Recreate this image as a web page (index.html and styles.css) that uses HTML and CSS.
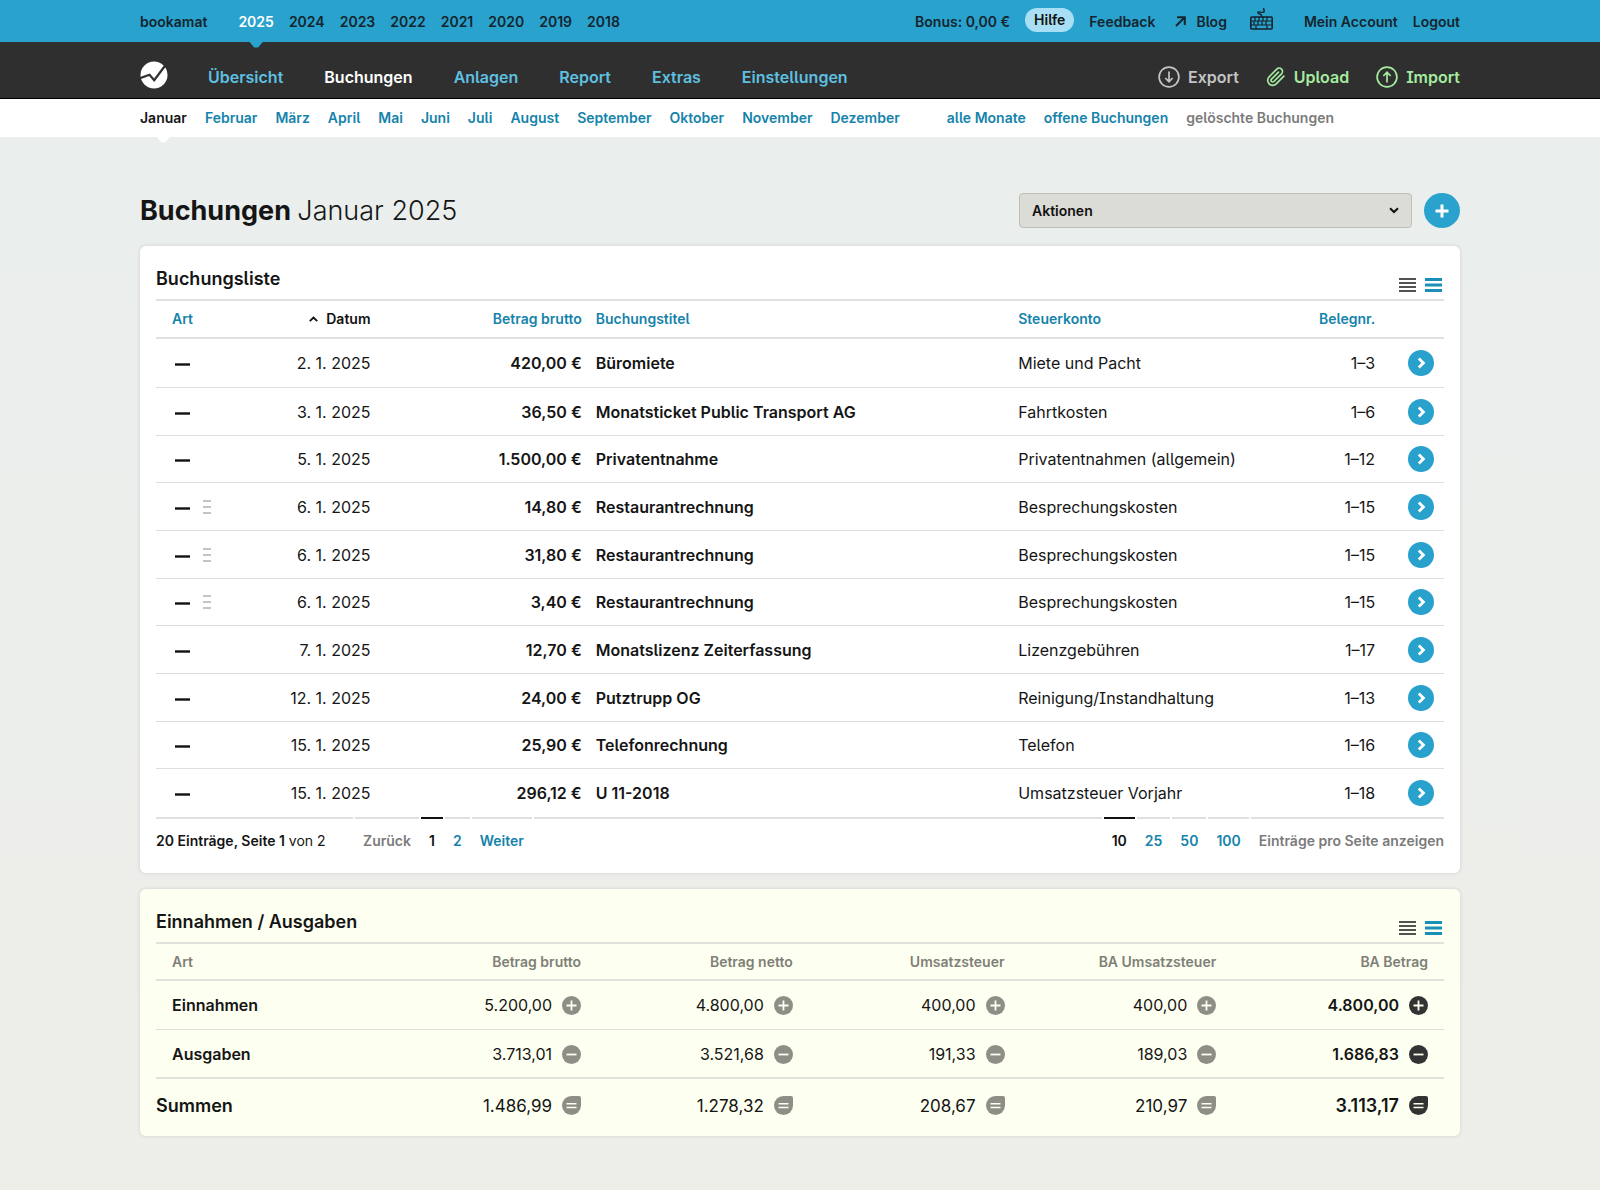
FILE: index.html
```html
<!DOCTYPE html>
<html lang="de">
<head>
<meta charset="utf-8">
<meta name="viewport" content="width=device-width, initial-scale=1">
<title>bookamat – Buchungen Januar 2025</title>
<link rel="stylesheet" href="styles.css">
</head>
<body>
<svg class="sprite" aria-hidden="true">
  <symbol id="i-go" viewBox="0 0 26 26"><circle cx="13" cy="13" r="13" fill="#28a2cd"/><path d="M10.8 8.6 15.4 13l-4.6 4.4" fill="none" stroke="#fff" stroke-width="2.8"/></symbol>
  <symbol id="i-minus" viewBox="0 0 15 3"><path d="M0 1.5h15" stroke="#111" stroke-width="2.4"/></symbol>
  <symbol id="i-split" viewBox="0 0 10 16"><path d="M1 2h8M1 8h8M1 14h8" stroke="#c4c4c4" stroke-width="2"/></symbol>
  <symbol id="i-dense" viewBox="0 0 17 14"><path d="M0 1h17M0 5h17M0 9h17M0 13h17" stroke="#1a1a1a" stroke-width="1.6"/></symbol>
  <symbol id="i-wide" viewBox="0 0 17 14"><path d="M0 1.5h17M0 7h17M0 12.5h17" stroke="#1a8fb8" stroke-width="2.8"/></symbol>
  <symbol id="i-plus" viewBox="0 0 19 19"><circle cx="9.5" cy="9.5" r="9.5" fill="currentColor"/><path d="M4.5 9.5h10M9.5 4.5v10" stroke="#fdfff0" stroke-width="1.8"/></symbol>
  <symbol id="i-less" viewBox="0 0 19 19"><circle cx="9.5" cy="9.5" r="9.5" fill="currentColor"/><path d="M4.5 9.5h10" stroke="#fdfff0" stroke-width="1.8"/></symbol>
  <symbol id="i-sum" viewBox="0 0 19 19"><path d="M9.5 0H17a2 2 0 0 1 2 2v7.5A9.5 9.5 0 1 1 9.5 0z" fill="currentColor"/><path d="M4.5 7.8h10M4.5 11.5h10" stroke="#fdfff0" stroke-width="1.5"/></symbol>
</svg>

<header>
  <div class="topbar">
    <div class="wrap topbar-row">
      <a class="brand" href="#">bookamat</a>
      <nav class="years" aria-label="Jahr">
        <a class="current" href="#">2025</a><a href="#">2024</a><a href="#">2023</a><a href="#">2022</a><a href="#">2021</a><a href="#">2020</a><a href="#">2019</a><a href="#">2018</a>
      </nav>
      <nav class="service" aria-label="Service">
        <a href="#">Bonus: 0,00 €</a>
        <a class="pill" href="#">Hilfe</a>
        <a href="#">Feedback</a>
        <a class="blog" href="#"><svg width="11" height="11" viewBox="0 0 11 11"><path d="M1 10 9.5 1.5M2 1.2h7.8V9" fill="none" stroke="currentColor" stroke-width="2"/></svg>Blog</a>
        <a class="keys" href="#" aria-label="Tastaturkürzel"><svg width="23" height="22" viewBox="0 0 23 22" fill="none" stroke="#142229"><path d="M11.5 9V7.5C11.5 5.5 7.8 6.5 7.8 4.5S13.5 6 14.3 3.5L13.5 0" stroke-width="1.4"/><rect x=".8" y="9" width="21.4" height="12" rx="1" stroke-width="1.6"/><path d="M1 13h21M1 17h21M5 9v4M9 9v4M13 9v4M17 9v4M4 13v4M8 13v4M12 13v4M16 13v4M6 17v4M17 17v4" stroke-width="1.2"/></svg></a>
        <a href="#">Mein Account</a>
        <a href="#">Logout</a>
      </nav>
    </div>
  </div>
  <div class="mainbar">
    <div class="wrap mainbar-row">
      <a class="logo" href="#" aria-label="Startseite"><svg width="28" height="28" viewBox="0 0 28 28"><circle cx="14" cy="14" r="13.5" fill="#fff"/><path d="M0 17.2 9.5 13.8l4.7 5.4L26 3.5" fill="none" stroke="#2f2f2f" stroke-width="2.2"/></svg></a>
      <nav class="sections" aria-label="Hauptnavigation">
        <a href="#">Übersicht</a><a class="current" href="#">Buchungen</a><a href="#">Anlagen</a><a href="#">Report</a><a href="#">Extras</a><a href="#">Einstellungen</a>
      </nav>
      <nav class="transfer" aria-label="Daten">
        <a class="export" href="#"><svg width="22" height="22" viewBox="0 0 22 22"><g fill="none" stroke="currentColor" stroke-width="1.7"><circle cx="11" cy="11" r="9.9"/><path d="M11 5.5v10M7.3 12l3.7 3.7 3.7-3.7"/></g></svg>Export</a>
        <a href="#"><svg width="20" height="22" viewBox="0 0 24 24"><path d="M21.44 11.05l-9.19 9.19a6 6 0 0 1-8.49-8.49l9.19-9.19a4 4 0 0 1 5.66 5.66l-9.2 9.19a2 2 0 0 1-2.83-2.83l8.49-8.48" fill="none" stroke="currentColor" stroke-width="2" stroke-linecap="round"/></svg>Upload</a>
        <a href="#"><svg width="22" height="22" viewBox="0 0 22 22"><g fill="none" stroke="currentColor" stroke-width="1.7"><circle cx="11" cy="11" r="9.9"/><path d="M11 16.5v-10M7.3 10 11 6.3l3.7 3.7"/></g></svg>Import</a>
      </nav>
    </div>
  </div>
  <div class="monthbar">
    <nav class="wrap months" aria-label="Monat">
      <a class="current" href="#">Januar</a><a href="#">Februar</a><a href="#">März</a><a href="#">April</a><a href="#">Mai</a><a href="#">Juni</a><a href="#">Juli</a><a href="#">August</a><a href="#">September</a><a href="#">Oktober</a><a href="#">November</a><a href="#">Dezember</a>
      <a class="all" href="#">alle Monate</a><a href="#">offene Buchungen</a><a class="muted" href="#">gelöschte Buchungen</a>
    </nav>
  </div>
</header>

<main class="wrap">
  <div class="page-head">
    <h1>Buchungen <span>Januar 2025</span></h1>
    <div class="select-box">
      <select aria-label="Aktionen"><option>Aktionen</option></select>
      <svg width="10" height="7" viewBox="0 0 10 7"><path d="M1 1.2 5 5l4-3.8" fill="none" stroke="#111" stroke-width="2"/></svg>
    </div>
    <button class="add" type="button" aria-label="Neue Buchung"><svg width="14" height="14" viewBox="0 0 14 14"><path d="M7 .5v13M.5 7h13" stroke="#fff" stroke-width="3"/></svg></button>
  </div>

  <section class="card">
    <div class="card-head">
      <h2>Buchungsliste</h2>
      <div class="density">
        <button type="button" aria-label="Kompakt"><svg width="17" height="14"><use href="#i-dense"/></svg></button>
        <button type="button" aria-label="Weit"><svg width="17" height="14"><use href="#i-wide"/></svg></button>
      </div>
    </div>
    <table class="bookings">
      <colgroup><col class="c-art"><col class="c-date"><col class="c-sum"><col class="c-title"><col class="c-account"><col class="c-no"><col class="c-go"></colgroup>
      <thead>
        <tr><th><a href="#">Art</a></th><th class="num"><a class="sorted" href="#"><svg width="9" height="6" viewBox="0 0 9 6"><path d="M.8 5.2 4.5 1.5l3.7 3.7" fill="none" stroke="#111" stroke-width="1.8"/></svg>Datum</a></th><th class="num"><a href="#">Betrag brutto</a></th><th><a href="#">Buchungstitel</a></th><th><a href="#">Steuerkonto</a></th><th class="num"><a href="#">Belegnr.</a></th><th></th></tr>
      </thead>
      <tbody>
        <tr><td><svg class="minus"><use href="#i-minus"/></svg></td><td class="num">2. 1. 2025</td><td class="num strong">420,00 €</td><td class="strong">Büromiete</td><td>Miete und Pacht</td><td class="num">1–3</td><td class="go"><a href="#" aria-label="Öffnen"><svg><use href="#i-go"/></svg></a></td></tr>
        <tr><td><svg class="minus"><use href="#i-minus"/></svg></td><td class="num">3. 1. 2025</td><td class="num strong">36,50 €</td><td class="strong">Monatsticket Public Transport AG</td><td>Fahrtkosten</td><td class="num">1–6</td><td class="go"><a href="#" aria-label="Öffnen"><svg><use href="#i-go"/></svg></a></td></tr>
        <tr><td><svg class="minus"><use href="#i-minus"/></svg></td><td class="num">5. 1. 2025</td><td class="num strong">1.500,00 €</td><td class="strong">Privatentnahme</td><td>Privatentnahmen (allgemein)</td><td class="num">1–12</td><td class="go"><a href="#" aria-label="Öffnen"><svg><use href="#i-go"/></svg></a></td></tr>
        <tr><td><svg class="minus"><use href="#i-minus"/></svg><svg class="split"><use href="#i-split"/></svg></td><td class="num">6. 1. 2025</td><td class="num strong">14,80 €</td><td class="strong">Restaurantrechnung</td><td>Besprechungskosten</td><td class="num">1–15</td><td class="go"><a href="#" aria-label="Öffnen"><svg><use href="#i-go"/></svg></a></td></tr>
        <tr><td><svg class="minus"><use href="#i-minus"/></svg><svg class="split"><use href="#i-split"/></svg></td><td class="num">6. 1. 2025</td><td class="num strong">31,80 €</td><td class="strong">Restaurantrechnung</td><td>Besprechungskosten</td><td class="num">1–15</td><td class="go"><a href="#" aria-label="Öffnen"><svg><use href="#i-go"/></svg></a></td></tr>
        <tr><td><svg class="minus"><use href="#i-minus"/></svg><svg class="split"><use href="#i-split"/></svg></td><td class="num">6. 1. 2025</td><td class="num strong">3,40 €</td><td class="strong">Restaurantrechnung</td><td>Besprechungskosten</td><td class="num">1–15</td><td class="go"><a href="#" aria-label="Öffnen"><svg><use href="#i-go"/></svg></a></td></tr>
        <tr><td><svg class="minus"><use href="#i-minus"/></svg></td><td class="num">7. 1. 2025</td><td class="num strong">12,70 €</td><td class="strong">Monatslizenz Zeiterfassung</td><td>Lizenzgebühren</td><td class="num">1–17</td><td class="go"><a href="#" aria-label="Öffnen"><svg><use href="#i-go"/></svg></a></td></tr>
        <tr><td><svg class="minus"><use href="#i-minus"/></svg></td><td class="num">12. 1. 2025</td><td class="num strong">24,00 €</td><td class="strong">Putztrupp OG</td><td>Reinigung/Instandhaltung</td><td class="num">1–13</td><td class="go"><a href="#" aria-label="Öffnen"><svg><use href="#i-go"/></svg></a></td></tr>
        <tr><td><svg class="minus"><use href="#i-minus"/></svg></td><td class="num">15. 1. 2025</td><td class="num strong">25,90 €</td><td class="strong">Telefonrechnung</td><td>Telefon</td><td class="num">1–16</td><td class="go"><a href="#" aria-label="Öffnen"><svg><use href="#i-go"/></svg></a></td></tr>
        <tr><td><svg class="minus"><use href="#i-minus"/></svg></td><td class="num">15. 1. 2025</td><td class="num strong">296,12 €</td><td class="strong">U 11-2018</td><td>Umsatzsteuer Vorjahr</td><td class="num">1–18</td><td class="go"><a href="#" aria-label="Öffnen"><svg><use href="#i-go"/></svg></a></td></tr>
      </tbody>
    </table>
    <div class="pager">
      <span class="count"><b>20 Einträge, Seite 1</b> von 2</span>
      <span class="muted">Zurück</span>
      <a class="current" href="#">1</a>
      <a href="#">2</a>
      <a href="#">Weiter</a>
      <span class="fill"></span>
      <a class="current" href="#">10</a>
      <a href="#">25</a>
      <a href="#">50</a>
      <a href="#">100</a>
      <span class="muted last">Einträge pro Seite anzeigen</span>
    </div>
  </section>

  <section class="card totals-card">
    <div class="card-head">
      <h2>Einnahmen / Ausgaben</h2>
      <div class="density">
        <button type="button" aria-label="Kompakt"><svg width="17" height="14"><use href="#i-dense"/></svg></button>
        <button type="button" aria-label="Weit"><svg width="17" height="14"><use href="#i-wide"/></svg></button>
      </div>
    </div>
    <table class="totals">
      <thead>
        <tr><th>Art</th><th>Betrag brutto</th><th>Betrag netto</th><th>Umsatzsteuer</th><th>BA Umsatzsteuer</th><th>BA Betrag</th></tr>
      </thead>
      <tbody>
        <tr><th>Einnahmen</th><td>5.200,00<svg><use href="#i-plus"/></svg></td><td>4.800,00<svg><use href="#i-plus"/></svg></td><td>400,00<svg><use href="#i-plus"/></svg></td><td>400,00<svg><use href="#i-plus"/></svg></td><td>4.800,00<svg><use href="#i-plus"/></svg></td></tr>
        <tr><th>Ausgaben</th><td>3.713,01<svg><use href="#i-less"/></svg></td><td>3.521,68<svg><use href="#i-less"/></svg></td><td>191,33<svg><use href="#i-less"/></svg></td><td>189,03<svg><use href="#i-less"/></svg></td><td>1.686,83<svg><use href="#i-less"/></svg></td></tr>
      </tbody>
      <tfoot>
        <tr><th>Summen</th><td>1.486,99<svg><use href="#i-sum"/></svg></td><td>1.278,32<svg><use href="#i-sum"/></svg></td><td>208,67<svg><use href="#i-sum"/></svg></td><td>210,97<svg><use href="#i-sum"/></svg></td><td>3.113,17<svg><use href="#i-sum"/></svg></td></tr>
      </tfoot>
    </table>
  </section>
</main>
</body>
</html>
```

FILE: styles.css
```css
* { box-sizing: border-box; }

body {
  margin: 0;
  min-height: 100vh;
  background: linear-gradient(#e9eeed, #eeeee9);
  color: #151515;
  font: 400 16px/24px Inter, "Liberation Sans", sans-serif;
  font-feature-settings: "cv05", "cv08";
}

a { color: #1583ab; text-decoration: none; }
button { border: 0; padding: 0; background: none; cursor: pointer; }
svg { display: block; flex: none; }
h1, h2 { margin: 0; }

.sprite { position: absolute; width: 0; height: 0; }
.wrap { max-width: 1320px; margin: 0 auto; }
.muted, a.muted { color: #7b7b7b; }

/* year bar */
.topbar { background: #29a2ce; font-size: 14px; font-weight: 600; }
.topbar a { color: #15252d; }
.topbar-row { display: flex; align-items: center; height: 42px; padding-top: 1px; }
.years { display: flex; gap: 15px; margin-left: 31px; }
.topbar .current { color: #fff; position: relative; }
.service { display: flex; align-items: center; gap: 15px; margin-left: auto; }
.topbar .pill { padding: 0 9px; border-radius: 12px; background: #a9dff4; color: #111; margin-bottom: 3px; }
.blog { display: flex; align-items: center; gap: 10px; margin-left: 5px; }
.keys { margin: 0 16px 6px 8px; }

/* small pointer below the active entry */
.current::after {
  content: "";
  position: absolute;
  left: 50%;
  width: 14px;
  height: 6px;
  margin-left: -7px;
  clip-path: polygon(0 0, 100% 0, 64% 100%, 36% 100%);
}
.years .current::after { top: 32px; background: #29a2ce; }

/* main navigation */
.mainbar { background: #2f2f2f; border-bottom: 1px solid #000; font-weight: 600; }
.mainbar-row { display: flex; align-items: center; height: 56px; padding-top: 14px; }
.logo { margin: 0 40px 5px 0; }
.sections { display: flex; gap: 41px; }
.sections a { color: #5ec0e0; }
.sections .current { color: #fff; }
.sections .current::after { display: none; }
.transfer { display: flex; gap: 27px; margin-left: auto; }
.transfer a { display: flex; align-items: center; gap: 8px; color: #a5ec9f; }
.transfer .export { color: #c4c4c4; }

/* months */
.monthbar { background: #fff; font-size: 14px; font-weight: 600; }
.months { display: flex; align-items: center; gap: 18px; height: 38px; padding-bottom: 1px; }
.months .current { color: #151515; position: relative; }
.months .current::after { top: 31px; background: #fff; }
.months .all { margin-left: 29px; }

/* page heading */
.page-head { display: flex; align-items: center; gap: 12px; padding: 56px 0 18px; }
h1 { flex: 1; font-size: 27px; line-height: 35px; font-weight: 700; }
h1 span { font-weight: 300; }
.select-box { position: relative; width: 393px; }
.select-box select {
  appearance: none;
  display: block;
  width: 100%;
  height: 35px;
  padding: 0 12px;
  border: 1px solid #bfbfb9;
  border-radius: 4px;
  background: #dcdcd7;
  color: #111;
  font: 600 14px/20px Inter, "Liberation Sans", sans-serif;
}
.select-box svg { position: absolute; right: 13px; top: 14px; pointer-events: none; }
.add { display: grid; place-items: center; width: 36px; height: 35px; border-radius: 50%; background: #29a2ce; }

/* cards */
.card { padding: 0 16px; border-radius: 6px; background: #fff; box-shadow: 0 0 4px rgba(0, 0, 0, .12); }
.card + .card { margin-top: 16px; }
.totals-card { background: #fdfff0; }
.card-head { display: flex; justify-content: space-between; align-items: flex-end; height: 55px; border-bottom: 2px solid #e0e0dd; }
h2 { font-size: 18px; line-height: 24px; font-weight: 600; padding-bottom: 8px; }
.density { display: flex; gap: 9px; padding: 0 2px 7px 0; }

table { width: 100%; border-collapse: separate; border-spacing: 0; table-layout: fixed; }
th, td { padding: 0 7px; height: 48px; text-align: left; white-space: nowrap; border-bottom: 1px solid #dededb; }
thead th { height: 37px; font-size: 14px; font-weight: 600; border-bottom: 2px solid #e0e0dd; }
th:first-child, td:first-child { padding-left: 16px; }
.strong { font-weight: 600; }

.c-art { width: 7.3%; }
.c-date { width: 9.9%; }
.c-sum { width: 16.4%; }
.c-title { width: 32.8%; }
.c-account { width: 17.1%; }
.c-no { width: 11.7%; }
.c-go { width: 4.8%; }
.bookings thead th { height: 38px; }
.bookings .num { text-align: right; }
.bookings tbody tr:first-child td { height: 49px; }
.bookings tbody tr:nth-child(3n) td { height: 47px; }
.bookings tbody tr:last-child td { border-bottom: 0; }
.sorted { display: inline-flex; align-items: center; gap: 8px; color: #111; vertical-align: top; }
.minus { display: inline-block; width: 15px; height: 3px; margin-left: 3px; vertical-align: middle; }
.split { display: inline-block; width: 10px; height: 16px; margin-left: 12px; vertical-align: -2px; }
.go svg { width: 26px; height: 26px; margin-left: auto; margin-right: 3px; }

/* paging */
.pager { display: flex; gap: 2px; padding-bottom: 20px; font-size: 14px; font-weight: 600; }
.pager > * { position: relative; padding: 10px 8px 0; border-top: 2px solid #e0e0dd; }
.pager .current { color: #111; border-color: #111; }
.pager .current::after { display: none; }
.pager .count { width: 197px; padding-left: 0; font-weight: 400; }
.pager .count b { font-weight: 600; }
.pager .fill { flex: 1; }
.pager .last { padding-right: 0; }

/* totals */
.totals th:not(:first-child), .totals td { width: 16.44%; padding-right: 16px; text-align: right; }
.totals thead th { color: #7f7f78; }
.totals tbody th, .totals tfoot th { font-weight: 600; }
.totals tbody th, .totals tbody td { height: 49px; }
.totals svg { display: inline-block; width: 19px; height: 19px; margin-left: 10px; color: #8e8e86; vertical-align: -4px; }
.totals td:last-child { font-weight: 600; }
.totals td:last-child svg { color: #333; }
.totals tbody tr:last-child > * { border-bottom: 2px solid #e0e0dd; }
.totals tfoot th, .totals tfoot td { height: 57px; padding-bottom: 4px; font-size: 17px; border-bottom: 0; }
.totals tfoot th, .totals tfoot td:last-child { font-size: 18px; }
.totals tfoot svg { vertical-align: -3px; }
.totals tfoot th:first-child { padding-left: 0; }
```
